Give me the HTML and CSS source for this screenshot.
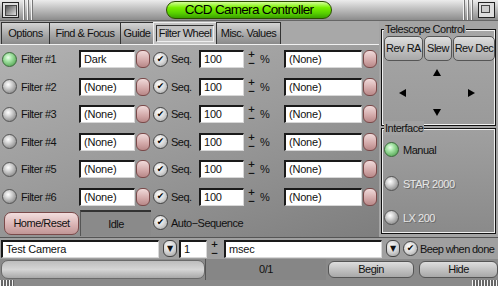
FILE: index.html
```html
<!DOCTYPE html>
<html lang="en">
<head>
    <meta charset="UTF-8">
    <title>CCD Camera Controller</title>
    <link rel="stylesheet" href="styles.css">
</head>
<body>
    <div class="titlebar">
        <div class="tb-left">
            <div class="winbox"><span></span></div>
            <div class="grip"></div>
        </div>
        <div class="title">CCD Camera Controller</div>
        <div class="tb-right">
            <div class="grip"></div>
            <div class="winbox max"><span></span></div>
        </div>
    </div>

    <div class="content">
        <div class="left">
            <div class="tabs">
                <div class="tab" style="width:49px">Options</div>
                <div class="tab" style="width:72px">Find &amp; Focus</div>
                <div class="tab" style="width:34px">Guide</div>
                <div class="tab active" style="width:64px"><span>Filter Wheel</span></div>
                <div class="tab" style="width:65px">Misc. Values</div>
            </div>
            <div class="panel">
                <div class="rows">
                    <div class="row">
                        <div class="led on"></div><div class="lbl">Filter #1</div>
                        <div class="fld name">Dark</div><div class="pill"></div>
                        <div class="chk">✔</div><div class="seq">Seq.</div>
                        <div class="fld pct">100</div><div class="pm"><b>+</b><b>−</b></div><div class="unit">%</div>
                        <div class="fld other">(None)</div><div class="pill"></div>
                    </div>
                    <div class="row">
                        <div class="led"></div><div class="lbl">Filter #2</div>
                        <div class="fld name">(None)</div><div class="pill"></div>
                        <div class="chk">✔</div><div class="seq">Seq.</div>
                        <div class="fld pct">100</div><div class="pm"><b>+</b><b>−</b></div><div class="unit">%</div>
                        <div class="fld other">(None)</div><div class="pill"></div>
                    </div>
                    <div class="row">
                        <div class="led"></div><div class="lbl">Filter #3</div>
                        <div class="fld name">(None)</div><div class="pill"></div>
                        <div class="chk">✔</div><div class="seq">Seq.</div>
                        <div class="fld pct">100</div><div class="pm"><b>+</b><b>−</b></div><div class="unit">%</div>
                        <div class="fld other">(None)</div><div class="pill"></div>
                    </div>
                    <div class="row">
                        <div class="led"></div><div class="lbl">Filter #4</div>
                        <div class="fld name">(None)</div><div class="pill"></div>
                        <div class="chk">✔</div><div class="seq">Seq.</div>
                        <div class="fld pct">100</div><div class="pm"><b>+</b><b>−</b></div><div class="unit">%</div>
                        <div class="fld other">(None)</div><div class="pill"></div>
                    </div>
                    <div class="row">
                        <div class="led"></div><div class="lbl">Filter #5</div>
                        <div class="fld name">(None)</div><div class="pill"></div>
                        <div class="chk">✔</div><div class="seq">Seq.</div>
                        <div class="fld pct">100</div><div class="pm"><b>+</b><b>−</b></div><div class="unit">%</div>
                        <div class="fld other">(None)</div><div class="pill"></div>
                    </div>
                    <div class="row">
                        <div class="led"></div><div class="lbl">Filter #6</div>
                        <div class="fld name">(None)</div><div class="pill"></div>
                        <div class="chk">✔</div><div class="seq">Seq.</div>
                        <div class="fld pct">100</div><div class="pm"><b>+</b><b>−</b></div><div class="unit">%</div>
                        <div class="fld other">(None)</div><div class="pill"></div>
                    </div>
                </div>
                <div class="home-row">
                    <div class="btn pink">Home/Reset</div>
                    <div class="status">Idle</div>
                    <div class="chk">✔</div><div class="seq">Auto−Sequence</div>
                </div>
            </div>
        </div>

        <div class="right">
            <div class="group scope">
                <div class="legend">Telescope Control</div>
                <div class="scope-btns">
                    <div class="btn gray" style="width:39px">Rev RA</div>
                    <div class="btn gray" style="width:28px">Slew</div>
                    <div class="btn gray" style="width:42px">Rev Dec</div>
                </div>
                <div class="arrows">
                    <div class="arrow up"></div>
                    <div class="arrow-mid">
                        <div class="arrow lt"></div>
                        <div class="arrow rt"></div>
                    </div>
                    <div class="arrow dn"></div>
                </div>
            </div>
            <div class="group iface">
                <div class="legend">Interface</div>
                <div class="opt"><div class="led on"></div>Manual</div>
                <div class="opt off"><div class="led"></div>STAR 2000</div>
                <div class="opt off"><div class="led"></div>LX 200</div>
            </div>
        </div>
    </div>

    <div class="bar1">
        <div class="fld cam">Test Camera</div>
        <div class="drop">▼</div>
        <div class="fld exp">1</div>
        <div class="pm"><b>+</b><b>−</b></div>
        <div class="fld msec">msec</div>
        <div class="drop">▼</div>
        <div class="chk">✔</div><div class="beep">Beep when done</div>
    </div>

    <div class="bar2">
        <div class="groove"></div>
        <div class="count">0/1</div>
        <div class="btn gray wide">Begin</div>
        <div class="btn gray wide hide">Hide</div>
    </div>

    <div class="strip">
        <div class="grip-s"></div>
        <div class="grip-s"></div>
    </div>
</body>
</html>
```

FILE: styles.css
```css
body {
    margin: 0;
    width: 498px;
    height: 286px;
    overflow: hidden;
    background: #8e8e8e;
    font-family: "Liberation Sans", Arial, sans-serif;
    font-size: 11px;
    letter-spacing: -0.5px;
    color: #111;
    white-space: nowrap;
}

/* title bar */
.titlebar {
    height: 21px;
    display: grid;
    grid-template-columns: 1fr auto 1fr;
    align-items: center;
    background: linear-gradient(#ececec, #c4c4c4 40%, #8c8c8c);
    border-bottom: 1px solid #666;
    box-sizing: border-box;
}

.tb-left, .tb-right {
    display: flex;
    align-items: center;
    height: 100%;
}

.tb-right {
    justify-content: flex-end;
}

.winbox {
    width: 15px;
    height: 14px;
    margin: 0 4px 0 2px;
    border: 1px solid #222;
    background: #ddd;
    display: flex;
    align-items: center;
    justify-content: center;
}

.winbox span {
    width: 10px;
    height: 9px;
    background: linear-gradient(135deg, #555, #ddd);
    border: 1px solid #444;
}

.winbox.max {
    margin: 0 3px 0 5px;
}

.winbox.max span {
    background: #ccc;
    width: 7px;
    height: 6px;
    margin: 0 3px 3px 0;
}

.grip {
    width: 10px;
    height: 100%;
    background: repeating-linear-gradient(90deg, #f4f4f4 0, #f4f4f4 1px, #777 1px, #777 2px, transparent 2px, transparent 4px);
}

.title {
    width: 164px;
    height: 16px;
    line-height: 16px;
    border: 1px solid #2b4d00;
    border-radius: 9px;
    text-align: center;
    font-size: 13.5px;
    letter-spacing: -0.7px;
    color: #000;
    background: linear-gradient(#d6ff9a, #78f000 35%, #58d000 70%, #3aa000);
}

/* main area */
.content {
    display: flex;
    height: 216px;
}

.left {
    width: 379px;
    display: flex;
    flex-direction: column;
}

.tabs {
    height: 24px;
    display: flex;
    align-items: flex-end;
    background: #a8a8a8;
    padding-left: 1px;
    border-bottom: 1px solid #f0f0f0;
    box-sizing: border-box;
}

.tab {
    height: 22px;
    line-height: 20px;
    box-sizing: border-box;
    border: 1px solid #333;
    border-bottom: none;
    margin-right: -1px;
    text-align: center;
    background: linear-gradient(#d4d4d4, #a4a4a4 60%, #8a8a8a);
}

.tab.active {
    background: #c4c4c4;
    padding: 2px 2px 0;
    border-color: #777;
    border-top-color: #eee;
    border-left-color: #eee;
}

.tab.active span {
    display: block;
    height: 17px;
    line-height: 15px;
    border: 1px solid #333;
    border-right-color: #eee;
    border-bottom-color: #eee;
    box-sizing: border-box;
}

.panel {
    flex: 1;
    background: linear-gradient(160deg, #b2b2b2, #9a9a9a 50%, #7e7e7e);
    padding-top: 5px;
    box-sizing: border-box;
}

.rows {
    display: flex;
    flex-direction: column;
    gap: 9.5px;
}

.row {
    height: 18px;
    display: flex;
    align-items: center;
}

.led {
    width: 13px;
    height: 13px;
    border-radius: 50%;
    border: 1px solid #555;
    background: radial-gradient(circle at 40% 35%, #fff 0, #ddd 25%, #9a9a9a 70%, #6a6a6a 100%);
    flex-shrink: 0;
}

.led.on {
    border-color: #3c6c3c;
    background: radial-gradient(circle at 40% 35%, #efffef 0, #a8e6a8 30%, #62b062 75%, #3c7c3c 100%);
}

.row .led {
    margin: 0 4px 0 2px;
}

.lbl {
    width: 58px;
}

.fld {
    height: 18px;
    line-height: 15px;
    box-sizing: border-box;
    background: #fff;
    border-top: 2px solid #1a1a1a;
    border-left: 2px solid #1a1a1a;
    border-right: 1px solid #d8d8d8;
    border-bottom: 1px solid #d8d8d8;
    padding-left: 3px;
    overflow: hidden;
    letter-spacing: -0.2px;
}

.fld.name {
    width: 56px;
}

.pill {
    width: 14px;
    height: 18px;
    margin-left: 1px;
    border-radius: 6px;
    box-sizing: border-box;
    border: 1px solid #7a4a4a;
    background: linear-gradient(#f0dada, #d2a8a8 60%, #b88888);
}

.chk {
    width: 13px;
    height: 13px;
    border-radius: 50%;
    border: 1px solid #444;
    background: radial-gradient(circle at 40% 35%, #fff, #d6d6d6 50%, #9a9a9a);
    font-family: "DejaVu Sans", sans-serif;
    font-size: 9px;
    line-height: 13px;
    letter-spacing: 0;
    text-align: center;
    color: #000;
    flex-shrink: 0;
}

.row .chk {
    margin-left: 3px;
}

.seq {
    margin-left: 3px;
    width: 28px;
}

.fld.pct {
    width: 45px;
}

.pm {
    width: 9px;
    height: 18px;
    margin: 0 4px 0 3px;
    display: flex;
    flex-direction: column;
    align-items: center;
    justify-content: space-between;
    font-family: "DejaVu Sans", sans-serif;
    font-size: 9px;
    line-height: 9px;
    letter-spacing: 0;
}

.unit {
    width: 24px;
}

.fld.other {
    width: 78px;
}

.home-row {
    margin-top: 4px;
    height: 26px;
    display: flex;
    align-items: center;
}

.btn {
    box-sizing: border-box;
    text-align: center;
    border: 1px solid #555;
}

.btn.pink {
    width: 75px;
    height: 23px;
    line-height: 21px;
    margin: 2px 1px 0 4px;
    border-radius: 7px;
    border-color: #7a4a4a;
    background: linear-gradient(#f2dede, #d8b0b0 60%, #c09696);
}

.status {
    width: 71px;
    height: 26px;
    line-height: 24px;
    text-align: center;
    box-sizing: border-box;
    border-top: 2px solid #333;
    border-left: 1px solid #555;
    background: #8a8a8a;
}

.home-row .chk {
    margin-left: 2px;
}

.home-row .seq {
    width: auto;
}

/* right column */
.right {
    width: 119px;
    padding: 5px 2px 3px;
    box-sizing: border-box;
    background: #a4a4a4;
    display: flex;
    flex-direction: column;
}

.group {
    position: relative;
    border: 1px solid #111;
    box-shadow: inset 0 0 0 1px #f0f0f0;
    margin-top: 3px;
}

.legend {
    position: absolute;
    top: -8px;
    left: 2px;
    padding: 0 1px;
    background: #a4a4a4;
    line-height: 14px;
}

.scope {
    height: 95px;
    background: linear-gradient(#a6a6a6, #9a9a9a);
}

.scope-btns {
    display: flex;
    gap: 1px;
    padding: 6px 0 0 2px;
}

.btn.gray {
    height: 25px;
    line-height: 23px;
    border-radius: 5px;
    background: linear-gradient(#dedede, #c2c2c2 50%, #a8a8a8);
}

.arrows {
    display: flex;
    flex-direction: column;
    align-items: center;
    padding: 8px 0 0 0;
    margin-left: -4px;
}

.arrow-mid {
    width: 76px;
    display: flex;
    justify-content: space-between;
    margin: 13px 0 12px;
}

.arrow {
    width: 0;
    height: 0;
}

.arrow.up {
    border-left: 4px solid transparent;
    border-right: 4px solid transparent;
    border-bottom: 7px solid #000;
}

.arrow.dn {
    border-left: 4px solid transparent;
    border-right: 4px solid transparent;
    border-top: 7px solid #000;
}

.arrow.lt {
    border-top: 4px solid transparent;
    border-bottom: 4px solid transparent;
    border-right: 7px solid #000;
}

.arrow.rt {
    border-top: 4px solid transparent;
    border-bottom: 4px solid transparent;
    border-left: 7px solid #000;
}

.iface {
    flex: 1;
    margin-top: 2px;
    padding: 13px 0 0 2px;
    display: flex;
    flex-direction: column;
    gap: 19px;
    background: linear-gradient(#a0a0a0, #8a8a8a);
}

.iface .legend {
    background: #a2a2a2;
}

.opt {
    display: flex;
    align-items: center;
    height: 15px;
}

.opt .led {
    margin-right: 4px;
}

.opt.off {
    color: #e6e6e6;
    text-shadow: 1px 1px 0 #6a6a6a;
}

/* bottom bars */
.bar1 {
    height: 22px;
    display: flex;
    align-items: center;
    background: #a0a0a0;
    padding-left: 1px;
    border-top: 1px solid #555;
    box-sizing: border-box;
}

.fld.cam {
    width: 158px;
}

.drop {
    width: 14px;
    height: 17px;
    margin: 0 1px 0 2px;
    border-radius: 6px;
    border: 1px solid #444;
    box-sizing: border-box;
    background: radial-gradient(circle at 40% 35%, #fff, #cfcfcf 55%, #9a9a9a);
    font-family: "DejaVu Sans", sans-serif;
    font-size: 8px;
    line-height: 15px;
    letter-spacing: 0;
    text-align: center;
}

.fld.exp {
    width: 28px;
}

.bar1 .pm {
    margin: 0 5px 0 3px;
}

.fld.msec {
    width: 158px;
}

.bar1 .drop {
    margin: 0 2px 0 4px;
}

.bar1 .chk {
    margin-left: 1px;
}

.beep {
    margin-left: 2px;
    letter-spacing: -0.6px;
}

.bar2 {
    height: 21px;
    display: flex;
    align-items: center;
    background: #8a8a8a;
    padding-left: 1px;
}

.groove {
    width: 204px;
    height: 19px;
    box-sizing: border-box;
    border-radius: 7px;
    border: 1px solid #6a6a6a;
    background: linear-gradient(#bdbdbd, #d6d6d6 50%, #a8a8a8);
}

.count {
    width: 121px;
    height: 21px;
    line-height: 21px;
    text-align: center;
    background: #868686;
    border-left: 1px solid #555;
    box-sizing: border-box;
}

.btn.wide {
    width: 86px;
    height: 17px;
    line-height: 15px;
    margin-left: 2px;
    border-radius: 6px;
}

.btn.hide {
    width: 79px;
    margin-left: 5px;
}

.strip {
    height: 6px;
    display: flex;
    justify-content: space-between;
    background: #8a8a8a;
}

.grip-s {
    width: 14px;
    height: 100%;
    background: repeating-linear-gradient(90deg, #f4f4f4 0, #f4f4f4 1px, #666 1px, #666 3px);
}

.grip-s:last-child {
    width: 26px;
}
```
